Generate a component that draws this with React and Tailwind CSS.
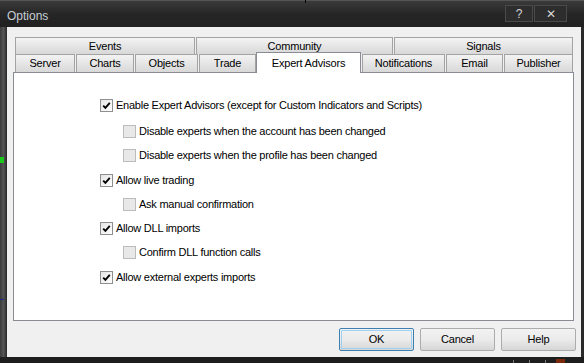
import React from 'react';

const font = { fontFamily: '"Liberation Sans", Arial, sans-serif' };

function Check({ checked }) {
  if (!checked) {
    return <span className="w-[13px] h-[13px] shrink-0 border border-[#bcbcbc] bg-[#e8e8e8]" />;
  }
  return (
    <span className="w-[13px] h-[13px] shrink-0 border border-[#8e8f8f] bg-linear-to-br from-[#e4e4e4] to-white flex items-center justify-center">
      <svg width="9" height="9" viewBox="0 0 9 9">
        <path d="M1.2 4.6 L3.4 6.9 L7.8 1.8" fill="none" stroke="#000" strokeWidth="1.9" />
      </svg>
    </span>
  );
}

function Row({ checked, label, sub, className }) {
  return (
    <div className={`flex items-center h-[13px] ${sub ? 'pl-[109px]' : 'pl-[86px]'} ${className}`}>
      <Check checked={checked} />
      <span className="ml-[3px] text-[11px] tracking-[-0.25px] leading-none text-black whitespace-nowrap">{label}</span>
    </div>
  );
}

function Tab({ label, className, active }) {
  if (active) {
    return (
      <div className={`relative z-10 h-[21px] -mb-px bg-white border border-b-0 border-[#898c95] flex items-center justify-center text-[11px] tracking-[-0.2px] text-black ${className}`}>
        {label}
      </div>
    );
  }
  return (
    <div className={`bg-linear-to-b from-[#f3f3f3] to-[#d8d8d8] border border-b-0 border-[#a3a3a3] flex items-center justify-center text-[11px] tracking-[-0.2px] text-black ${className}`}>
      {label}
    </div>
  );
}

function Btn({ label, focused }) {
  return (
    <button
      className={`w-[75px] h-[23px] border ${focused ? 'border-[#3c7fb1]' : 'border-[#acacac]'} rounded-[2px] bg-linear-to-b from-[#f2f2f2] via-[#ebebeb] to-[#d6d6d6] text-[11px] tracking-[-0.2px] text-black flex items-center justify-center`}
    >
      <span className={`${focused ? 'border border-[#9fd0f2] rounded-[1px] w-[71px] h-[19px] flex items-center justify-center' : ''}`}>{label}</span>
    </button>
  );
}

export default function App() {
  return (
    <div className="w-[584px] h-[363px] bg-[#1b1b1b] flex flex-col overflow-hidden relative" style={font}>
      {/* background chart bits */}
      <div className="absolute left-[305px] top-0 w-px h-[3px] bg-black z-20" />
      <div className="absolute left-0 top-[157px] w-[4px] h-[6px] bg-[#19c819] z-20" />
      <div className="absolute left-0 top-[299px] w-[4px] h-px bg-[#1a2a8c] z-20" />

      {/* title bar */}
      <div className="h-[27px] shrink-0 bg-linear-to-b from-[#3a3a3a] via-[#262626] to-[#202020] border-t border-[#555] flex items-start">
        <span className="ml-[7px] mt-[6px] text-[12px] text-[#c6cdd6]">Options</span>
        <div className="ml-auto mr-[17px] mt-[4px] flex gap-px">
          <div className="w-[28px] h-[17px] bg-[#2d2d2d] border border-[#4a4a4a] flex items-center justify-center text-[12px] text-[#d6d6d6]">?</div>
          <div className="w-[33px] h-[17px] bg-[#2d2d2d] border border-[#4a4a4a] flex items-center justify-center text-[12px] text-[#d6d6d6]">✕</div>
        </div>
      </div>

      {/* body */}
      <div className="flex flex-1">
        <div className="w-[7px] bg-linear-to-r from-[#3a3a3a] via-[#555] to-[#2a2a2a]" />
        <div className="flex-1 bg-[#f0f0f0] flex flex-col pl-[6px] pr-[7px] pt-[10px]">
          {/* tabs */}
          <div className="ml-[2px] flex gap-px h-[17px]">
            <Tab label="Events" className="w-[180px] h-[17px]" />
            <Tab label="Community" className="w-[197px] h-[17px]" />
            <Tab label="Signals" className="w-[179px] h-[17px]" />
          </div>
          <div className="ml-[2px] flex items-end gap-px h-[18px]">
            <Tab label="Server" className="w-[60px] h-[18px]" />
            <Tab label="Charts" className="w-[58px] h-[18px]" />
            <Tab label="Objects" className="w-[63px] h-[18px]" />
            <Tab label="Trade" className="w-[57px] h-[18px] -mr-px" />
            <Tab label="Expert Advisors" className="w-[105px]" active />
            <Tab label="Notifications" className="w-[83px] h-[18px]" />
            <Tab label="Email" className="w-[57px] h-[18px]" />
            <Tab label="Publisher" className="w-[69px] h-[18px]" />
          </div>

          {/* panel */}
          <div className="h-[249px] bg-white border border-[#898c95] flex flex-col">
            <Row checked label="Enable Expert Advisors (except for Custom Indicators and Scripts)" className="mt-[26px]" />
            <Row sub label="Disable experts when the account has been changed" className="mt-[13px]" />
            <Row sub label="Disable experts when the profile has been changed" className="mt-[11px]" />
            <Row checked label="Allow live trading" className="mt-[12px]" />
            <Row sub label="Ask manual confirmation" className="mt-[11px]" />
            <Row checked label="Allow DLL imports" className="mt-[11px]" />
            <Row sub label="Confirm DLL function calls" className="mt-[11px]" />
            <Row checked label="Allow external experts imports" className="mt-[12px]" />
          </div>

          {/* buttons */}
          <div className="flex justify-end gap-[6px] mt-[7px] -mr-[2px]">
            <Btn label="OK" focused />
            <Btn label="Cancel" />
            <Btn label="Help" />
          </div>
        </div>
        <div className="w-[3px] bg-[#2a2a2a]" />
      </div>

      {/* bottom edge */}
      <div className="h-[6px] shrink-0 bg-[#1e1e1e] relative">
        <div className="absolute left-[513px] top-[3px] w-px h-[3px] bg-[#777]" />
        <div className="absolute left-[529px] top-[3px] w-px h-[3px] bg-[#777]" />
        <div className="absolute left-[545px] top-[3px] w-px h-[3px] bg-[#777]" />
        <div className="absolute left-[556px] top-[2px] w-[9px] h-[4px] bg-[#7a2a0a]" />
      </div>
    </div>
  );
}
